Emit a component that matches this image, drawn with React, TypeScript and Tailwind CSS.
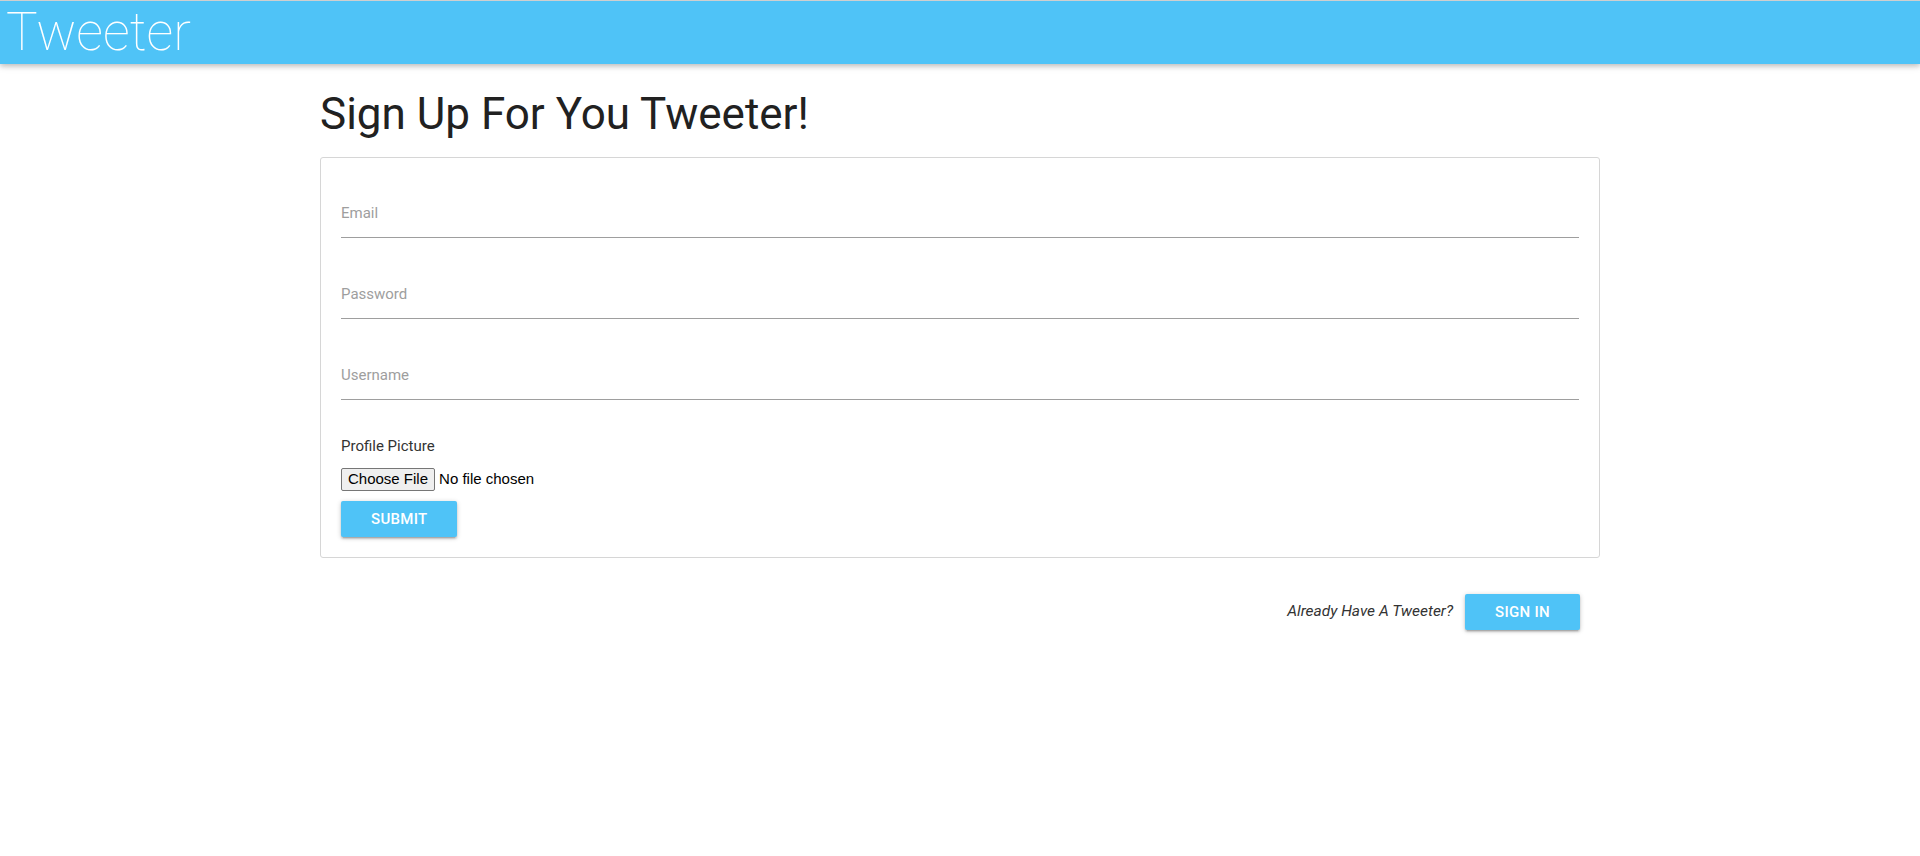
import React from 'react';

const fields = ['Email', 'Password', 'Username'];

function Field({ label, first }: { label: string; first?: boolean }) {
  return (
    <div className={first ? 'mt-[12px]' : 'mt-[33px]'}>
      <div className="flex h-[48px] items-center border-b border-[#9e9e9e] text-[15px] text-[#9e9e9e]">
        {label}
      </div>
    </div>
  );
}

const btn =
  'h-[36px] rounded-[2px] bg-[#4fc3f7] px-[30px] text-[15px] font-medium tracking-[0.3px] text-white uppercase shadow-[0_2px_2px_rgba(0,0,0,0.14),0_3px_1px_-2px_rgba(0,0,0,0.12),0_1px_5px_rgba(0,0,0,0.2)]';

export default function App() {
  return (
    <div className="min-h-[856px] bg-white font-['Roboto',sans-serif] text-[15px] text-[#333]">
      {/* Nav */}
      <div className="border-t border-[#cfcfcf] bg-[#4fc3f7] shadow-[0_2px_5px_rgba(0,0,0,0.18),0_2px_8px_rgba(0,0,0,0.12)]">
        <div className="flex h-[63px] items-center pl-[6px]">
          <span className="text-[53px] leading-none font-thin text-white">Tweeter</span>
        </div>
      </div>

      <div className="mx-auto w-[1280px]">
        <h1 className="mt-[25px] text-[44px] leading-[50px] font-normal text-[#212121]">Sign Up For You Tweeter!</h1>

        {/* Card */}
        <div className="mt-[18px] rounded-[3px] border border-[#d6d6d6] p-5">
          {fields.map((f, i) => (
            <Field key={f} label={f} first={i === 0} />
          ))}

          <div className="mt-[37px] text-[15px] leading-[18px] text-[#333]">Profile Picture</div>
          <div className="mt-[13px] flex items-center font-['Liberation_Sans',sans-serif] text-[15px] text-black">
            <span className="flex h-[23px] items-center rounded-[2px] border border-[#767676] bg-[#efefef] px-[6px]">
              Choose File
            </span>
            <span className="ml-[4px]">No file chosen</span>
          </div>
          <button className={`mt-[10px] ${btn}`}>Submit</button>
        </div>

        {/* Sign in */}
        <div className="mt-[36px] flex items-center justify-end gap-[12px] pr-[20px]">
          <span className="text-[15.5px] text-[#333] italic">Already Have A Tweeter?</span>
          <button className={btn}>Sign In</button>
        </div>
      </div>
    </div>
  );
}
